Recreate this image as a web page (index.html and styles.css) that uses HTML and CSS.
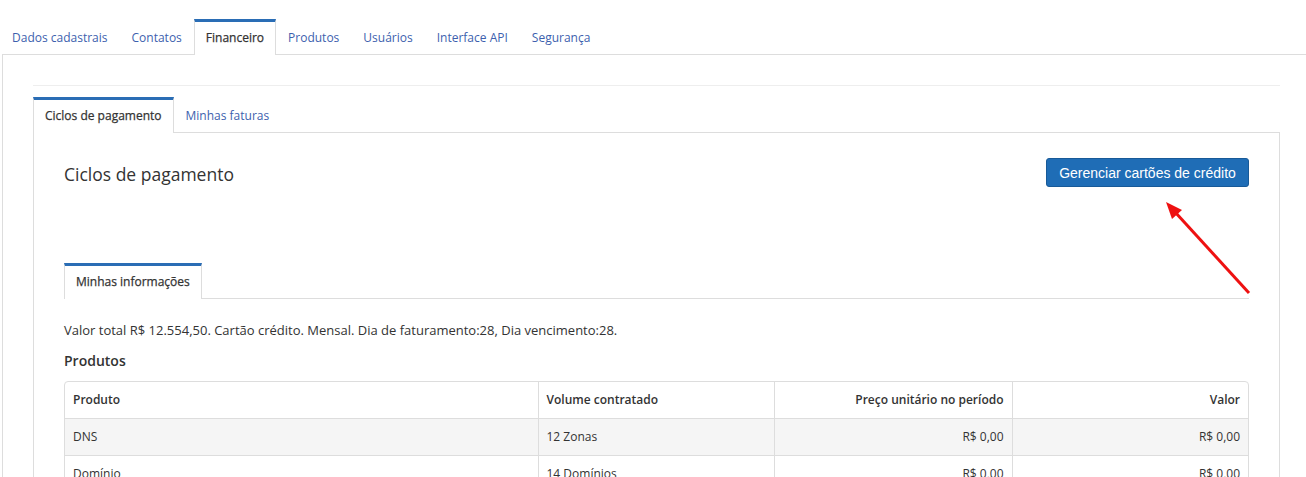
FILE: index.html
```html
<!DOCTYPE html>
<html lang="pt-BR">
<head>
<meta charset="utf-8">
<title>Financeiro</title>
<link rel="stylesheet" href="styles.css">
</head>
<body>
<ul class="tabs tabs-top">
  <li class="tab"><a href="#">Dados cadastrais</a></li>
  <li class="tab"><a href="#">Contatos</a></li>
  <li class="tab active"><a href="#">Financeiro</a></li>
  <li class="tab"><a href="#">Produtos</a></li>
  <li class="tab"><a href="#">Usuários</a></li>
  <li class="tab"><a href="#">Interface API</a></li>
  <li class="tab"><a href="#">Segurança</a></li>
</ul>
<div class="outer-panel">
  <div class="rule"></div>
  <ul class="tabs tabs-inner">
    <li class="tab active"><a href="#">Ciclos de pagamento</a></li>
    <li class="tab"><a href="#">Minhas faturas</a></li>
  </ul>
  <div class="inner-panel">
    <div class="header-row">
      <h2 class="title">Ciclos de pagamento</h2>
      <button class="btn-primary" type="button">Gerenciar cartões de crédito</button>
    </div>
    <ul class="tabs tabs-info">
      <li class="tab active"><a href="#">Minhas informações</a></li>
    </ul>
    <p class="summary">Valor total R$ 12.554,50. Cartão crédito. Mensal. Dia de faturamento:28, Dia vencimento:28.</p>
    <h3 class="subtitle">Produtos</h3>
    <div class="table-wrap">
      <table class="products">
        <colgroup>
          <col class="c1"><col class="c2"><col class="c3"><col class="c4">
        </colgroup>
        <thead>
          <tr><th>Produto</th><th>Volume contratado</th><th class="num">Preço unitário no período</th><th class="num">Valor</th></tr>
        </thead>
        <tbody>
          <tr class="odd"><td>DNS</td><td>12 Zonas</td><td class="num">R$ 0,00</td><td class="num">R$ 0,00</td></tr>
          <tr><td>Domínio</td><td>14 Domínios</td><td class="num">R$ 0,00</td><td class="num">R$ 0,00</td></tr>
        </tbody>
      </table>
    </div>
  </div>
</div>
<svg class="arrow" width="100" height="110" viewBox="0 0 100 110" aria-hidden="true">
  <line x1="93" y1="98" x2="19" y2="17" stroke="#ee1111" stroke-width="3"/>
  <polygon points="10,7 26,15 16,24" fill="#ee1111"/>
</svg>
</body>
</html>
```
FILE: styles.css
```css
html, body {
  margin: 0;
  padding: 0;
  background: #fff;
  overflow: hidden;
}
body {
  font-family: "Open Sans", "Liberation Sans", sans-serif;
  font-size: 12px;
  color: #333;
  position: relative;
  height: 477px;
}
a { text-decoration: none; }

.tabs {
  display: flex;
  list-style: none;
  margin: 0;
  padding: 0;
}
.tab {
  height: 36px;
  margin-bottom: -1px;
  box-sizing: border-box;
  border-top: 3px solid transparent;
  border-left: 1px solid transparent;
  border-right: 1px solid transparent;
  position: relative;
  z-index: 1;
}
.tab a {
  display: block;
  padding: 0 11px;
  line-height: 32px;
  color: #3d5fae;
}
.tab.active {
  border-top-color: #2a6db5;
  border-left-color: #ddd;
  border-right-color: #ddd;
  background: #fff;
}
.tab.active a {
  color: #333;
  -webkit-text-stroke: 0.25px #333;
}

.tabs-top {
  padding-top: 19px;
}

.outer-panel {
  margin-left: 2px;
  border-top: 1px solid #ddd;
  border-left: 1px solid #ddd;
  padding: 30px 26px 0 30px;
}
.rule {
  border-top: 1px solid #eee;
}
.tabs-inner {
  margin-top: 11px;
}
.inner-panel {
  border: 1px solid #ddd;
  padding: 25px 30px 0 30px;
  height: 400px;
}
.header-row {
  display: flex;
  justify-content: space-between;
  align-items: center;
  height: 29px;
}
.title {
  margin: 0;
  font-size: 17.5px;
  font-weight: 400;
  line-height: 24px;
  color: #333;
  padding-top: 3px;
}
.btn-primary {
  font-family: "Liberation Sans", Arial, sans-serif;
  font-size: 14px;
  color: #fff;
  background: #1f6db6;
  border: 1px solid #185a98;
  border-radius: 3px;
  height: 29px;
  width: 203px;
  padding: 0 10px;
}
.tabs-info {
  margin-top: 76px;
  border-bottom: 1px solid #ddd;
}
.summary {
  margin: 22px 0 0;
  font-size: 13px;
  line-height: 18px;
}
.subtitle {
  margin: 12px 0 0;
  font-size: 14px;
  font-weight: 600;
  line-height: 20px;
}
.table-wrap {
  margin-top: 10px;
  border: 1px solid #ddd;
  border-radius: 4px;
  overflow: hidden;
}
.products {
  width: 100%;
  border-collapse: collapse;
  table-layout: fixed;
}
.c1 { width: 473px; }
.c2 { width: 236px; }
.c3 { width: 238px; }
.products th,
.products td {
  padding: 8px;
  line-height: 20px;
  text-align: left;
  border-left: 1px solid #ddd;
  border-top: 1px solid #ddd;
  white-space: nowrap;
}
.products th {
  font-weight: 600;
  border-top: none;
}
.products th:first-child,
.products td:first-child {
  border-left: none;
}
.products .num { text-align: right; }
.products tr.odd td { background: #f5f5f5; }

.arrow {
  position: absolute;
  left: 1156px;
  top: 195px;
}
```
